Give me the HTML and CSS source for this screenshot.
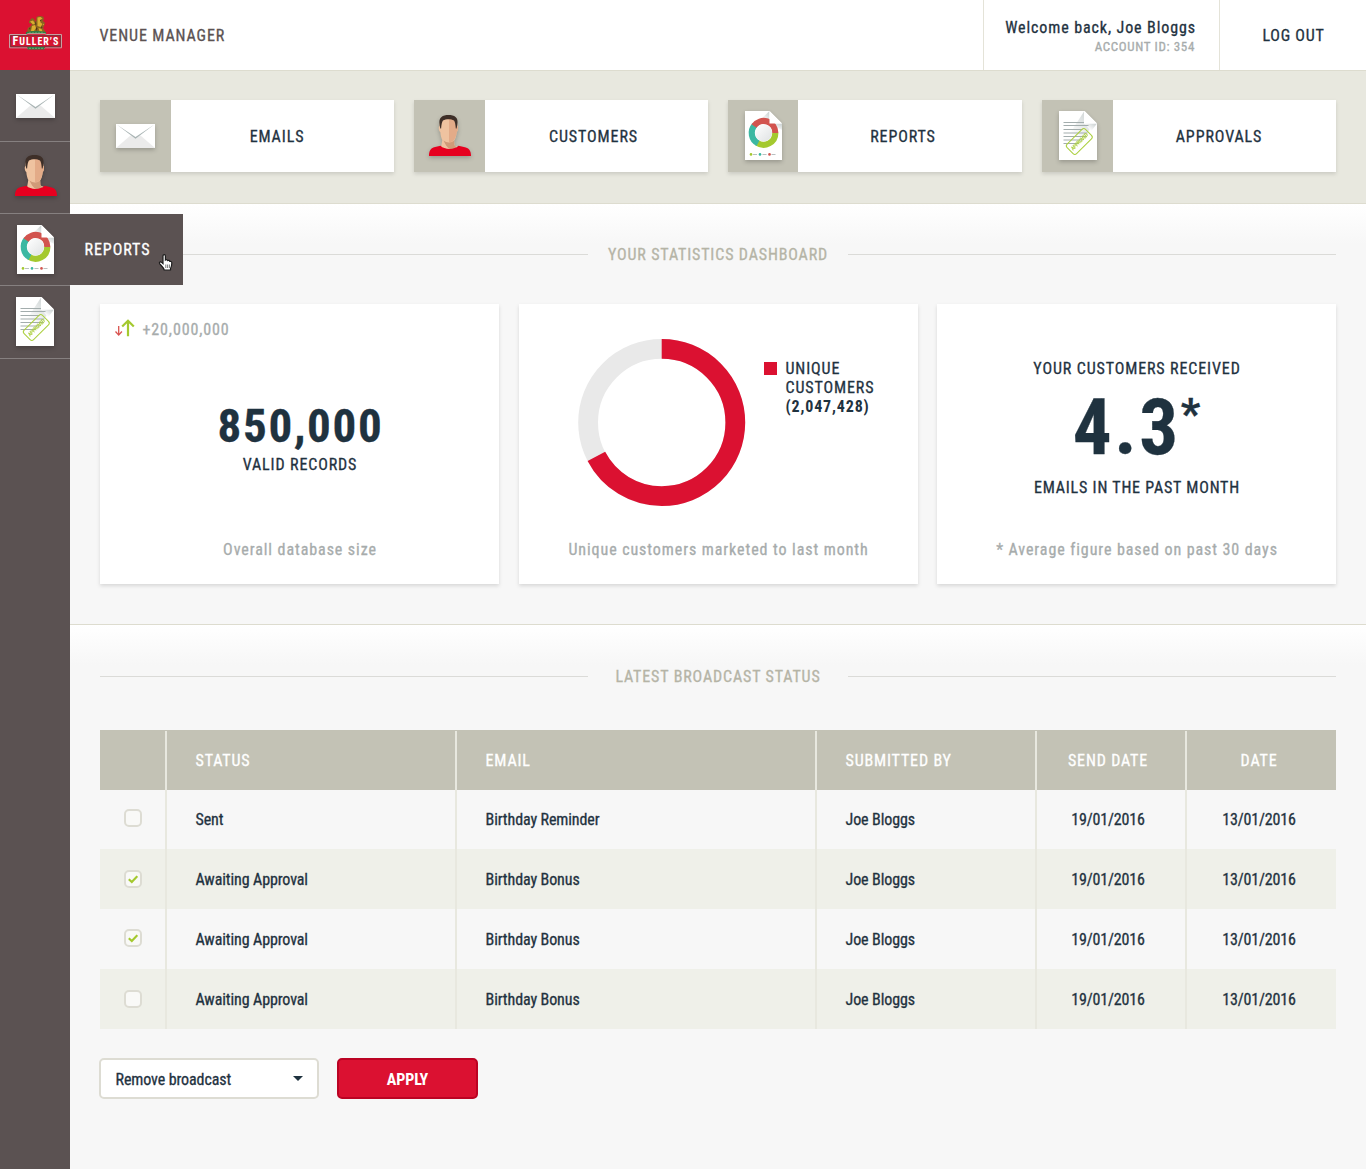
FILE: index.html
```html
<!DOCTYPE html>
<html lang="en">
<head>
<meta charset="utf-8">
<title>Venue Manager</title>
<link rel="stylesheet" href="styles.css">
</head>
<body>
<svg class="defs" width="0" height="0" aria-hidden="true">
  <defs>
    <linearGradient id="fold" x1="0" y1="1" x2="1" y2="0"><stop offset="0.3" stop-color="#fff"/><stop offset="1" stop-color="#c6cdcd"/></linearGradient>
    <linearGradient id="disc" x1="0" y1="0" x2="1" y2="1"><stop offset="0" stop-color="#fff"/><stop offset="1" stop-color="#dfe2e3"/></linearGradient>
  </defs>
  <symbol id="i-mail" viewBox="0 0 39 24">
    <path fill="#fff" d="M0 0h39v24H0z"/>
    <path fill="#ebebeb" d="M0 24 14.500 11.500h10L39 24z"/>
    <path fill="#fff" d="M0 0h39L19.500 14z"/>
    <path fill="#a9b4b4" d="M1 .8 19.500 13 38 .8 19.500 14.800z"/>
  </symbol>
  <symbol id="i-user" viewBox="0 0 42 41">
    <path fill="#efc3a0" d="M10.500 11C10.500 5 13 2 19.500 2S28.300 5 28.300 11c1.200.2.900 5-.6 6-.3 4-1.200 6.500-2.500 8.500l.3 5L29 32l-8 5-9-4.500 1.300-7.500c-1-2-1.700-4.500-2-8C9.600 16 9.300 11.200 10.500 11z"/>
    <path fill="#e3ab88" d="M20 2c6 0 8.300 3 8.300 9 1.200.2.900 5-.6 6-.4 5-2.700 10-6.200 10H20z"/>
    <path fill="#d09b78" d="M14.500 25.500c3 2.500 8 2.500 10.700 0V30l2.300 2.500L22 35c-4-2.500-6-6-7.500-9.500z"/>
    <path fill="#3e2f28" d="M11.300 13.500C10 8 9.800 4 12.500 2c3-2.600 11-2.600 14 0 2.700 2 2.300 6 1.100 11.500h-.8c-.3-4-.8-6.500-1.800-8-3-1.600-8-1.600-11 0-1 1.500-1.600 4-1.900 8z"/>
    <path fill="#e6001f" d="M0 41c0-5.500 2-7.800 5-8.700l6.500-1.500c4 4.200 14 4.200 18 0l6.500 1.500c4 1 6 3.700 6 8.700z"/>
  </symbol>
  <symbol id="i-report" viewBox="0 0 37 49">
    <path fill="#fff" d="M0 0h24.500L37 12.500V49H0z"/>
    <path fill="url(#fold)" d="M14 10 24.500 0v13z"/>
    <path fill="url(#fold)" d="M24.500 12.500H37V19z"/>
    <g fill="none" stroke-width="6.200">
      <path stroke="#a4c92f" d="M30.300 22A11.700 11.700 0 0 1 12 31.700"/>
      <path stroke="#3cb8a2" d="M13 32.300A11.700 11.700 0 0 1 9.600 14.300"/>
      <path stroke="#d2544f" d="M9 15A11.700 11.700 0 0 1 30.300 22"/>
    </g>
    <path fill="#fff" d="M24.500 0 37 12.500H24.500z"/>
    <circle cx="18.600" cy="22" r="8.400" fill="url(#disc)"/>
    <g fill="#b9c0c1"><path d="M8 43h4v.9H8zM17.500 43h4v.9h-4zM26.500 43h4v.9h-4z"/></g>
    <circle cx="6" cy="43.400" r="1.300" fill="#a4c92f"/><circle cx="15" cy="43.400" r="1.300" fill="#3cb8a2"/><circle cx="24.500" cy="43.400" r="1.300" fill="#d2544f"/>
  </symbol>
  <symbol id="i-approve" viewBox="0 0 38 49">
    <path fill="#fff" d="M0 0h25.500L38 12.500V49H0z"/>
    <path fill="url(#fold)" d="M4 33 25 0.500v12.500L34 14 20 33z"/>
    <path fill="url(#fold)" d="M25.500 12.500H38l-6 8z"/>
    <path fill="#fff" d="M25.500 0 38 12.500H25.500z"/>
    <path stroke="#a3adad" stroke-width="1" d="M4.500 11.500H25M4.500 14.500h25M4.500 18.500h19M4.500 22h24M4.500 25.500h23M4.500 29h19M4.500 32.500h15"/>
    <g transform="translate(20.300 30.500) rotate(-45)" fill="none" stroke="#abcf3e">
      <rect x="-13" y="-6.700" width="26" height="13.400" rx="2.500"/>
    </g>
  </symbol>
</svg>

<div class="app">
  <aside class="sidebar">
    <div class="logo">
      <svg width="54" height="36" viewBox="0 0 54 36">
        <path fill="#8a6420" d="M20 6l3-3 2 1 2 3 .5-5L30 1l4 .5 1 2-1 2.500 2 2-1 3-1 2 2 3 .5 2H19l-1-2 1-3 3-2 1-2-3-1z"/>
        <path fill="#d9ae2e" d="M21 6.500l3-1 2 3-2 1zM28.500 2.500l3-.5 2 1.500-2 1v3l2 1.500-2 3-3-1zM23 11l3-1 1 3-2 3h-3zM29.500 13l3 1 1 2.500h-3zM34 9.500l1-1v2z"/>
        <path fill="#4a3516" d="M26 6l1.500 3-1 1.500zM31 5l1.500.5-1.500 1zM27 12l1.500 1.500L27 16zM20 13l1.500-.5-.5 2.500zM32 11.500l1.500.5-1 1.500z"/>
        <path fill="#2f7d46" d="M17 17q10-2 20 0v3H17z"/>
        <path fill="#d51530" stroke="#c9a0a3" d="M.5 19.500h17l1.300-.8H36l1.300.8h15.200v13.300h-16l-1 .7H19l-1-.7H.5z"/>
        <path fill="none" stroke="#693a3d" stroke-width=".9" d="M1.700 20.700h49.600v11H1.700z"/>
        <text class="brand" x="3.500" y="30.300" textLength="46" lengthAdjust="spacing"><tspan class="brand-cap">F</tspan>ULLER’S</text>
        <path fill="#2f7d46" d="M18.500 32h17v2.500h-17z"/>
        <path stroke="#9bbf8b" stroke-width=".6" stroke-dasharray="2 1" d="M20 18h15M20 33.300h15"/>
      </svg>
    </div>
    <a class="side-item"><svg class="ic mail"><use href="#i-mail"/></svg></a>
    <a class="side-item raised"><svg class="ic user"><use href="#i-user"/></svg></a>
    <a class="side-item"><svg class="ic report"><use href="#i-report"/></svg>
      <span class="flyout">REPORTS</span>
      <svg class="cursor" width="15" height="18" viewBox="0 0 15 18"><path fill="#fff" stroke="#1c1c1c" stroke-width="1.200" d="M5 2c0-1.800 2.400-1.800 2.400 0v4c.8-.6 1.900-.3 2.200.6.900-.5 1.900-.2 2.200.8 1.300-.3 2 .5 2 1.600 0 3-.3 4-1.300 5.500v1.500H6.200C6 13.700 3 11.500 1.600 9.600c-.7-1.300.8-2.200 2-1.200L5 9.600z"/><path stroke="#1c1c1c" stroke-width=".6" d="M7.800 10.500v3.500M9.600 10.500v3.500M11.400 10.500v3.500"/></svg>
    </a>
    <a class="side-item last"><svg class="ic approve" viewBox="0 0 38 49"><use href="#i-approve" width="38" height="49"/><text class="stamp" text-anchor="middle" textLength="22" transform="translate(20.300 30.500) rotate(-45)" y="2">APPROVED</text></svg></a>
  </aside>

  <div class="main">
    <header class="topbar">
      <h1 class="title">VENUE MANAGER</h1>
      <div class="account"><div class="welcome">Welcome back, Joe Bloggs</div><div class="acc-id">ACCOUNT ID: 354</div></div>
      <a class="logout">LOG OUT</a>
    </header>

    <nav class="tiles">
      <a class="tile"><span class="tile-ic"><svg class="ic mail"><use href="#i-mail"/></svg></span><span class="tile-label">EMAILS</span></a>
      <a class="tile customers"><span class="tile-ic"><svg class="ic user"><use href="#i-user"/></svg></span><span class="tile-label">CUSTOMERS</span></a>
      <a class="tile reports"><span class="tile-ic"><svg class="ic report"><use href="#i-report"/></svg></span><span class="tile-label">REPORTS</span></a>
      <a class="tile approvals"><span class="tile-ic"><svg class="ic approve" viewBox="0 0 38 49"><use href="#i-approve" width="38" height="49"/><text class="stamp" text-anchor="middle" textLength="22" transform="translate(20.300 30.500) rotate(-45)" y="2">APPROVED</text></svg></span><span class="tile-label">APPROVALS</span></a>
    </nav>

    <section class="panel stats">
      <h2 class="heading"><span>YOUR STATISTICS DASHBOARD</span></h2>
      <div class="cards">
        <article class="card">
          <div class="trend">
            <svg width="20" height="18" viewBox="0 0 20 18" fill="none"><path stroke="#d9534f" stroke-width="1.300" d="M3.700 7v9M.5 12.500l3.200 3.600 3.200-3.600"/><path stroke="#a4c92f" stroke-width="2.200" d="M13 17.200V2M7.200 7.500 13 1.700l5.800 5.800"/></svg>
            <span>+20,000,000</span>
          </div>
          <div class="records">850,000</div>
          <div class="records-label">VALID RECORDS</div>
          <p class="note">Overall database size</p>
        </article>
        <article class="card donut-card">
          <div class="chart">
            <svg width="168" height="168" viewBox="0 0 168 168"><g fill="none" stroke-width="19.800"><circle cx="83.700" cy="83.500" r="73.600" stroke="#e9e9e9"/><circle cx="83.700" cy="83.500" r="73.600" stroke="#db1131" pathLength="360" stroke-dasharray="242.500 360" transform="rotate(-90 83.700 83.500)"/></g></svg>
            <div class="legend"><i class="swatch"></i><div>UNIQUE<br>CUSTOMERS<br><b>(2,047,428)</b></div></div>
          </div>
          <p class="note">Unique customers marketed to last month</p>
        </article>
        <article class="card">
          <div class="received">YOUR CUSTOMERS RECEIVED</div>
          <div class="average">4.3<span class="star">*</span></div>
          <div class="past">EMAILS IN THE PAST MONTH</div>
          <p class="note">* Average figure based on past 30 days</p>
        </article>
      </div>
    </section>

    <section class="panel broadcasts">
      <h2 class="heading"><span>LATEST BROADCAST STATUS</span></h2>
      <div class="table">
        <div class="row head"><div></div><div>STATUS</div><div>EMAIL</div><div>SUBMITTED BY</div><div class="mid">SEND DATE</div><div class="mid">DATE</div></div>
        <div class="row first"><div><i class="check"></i></div><div>Sent</div><div>Birthday Reminder</div><div>Joe Bloggs</div><div class="mid">19/01/2016</div><div class="mid">13/01/2016</div></div>
        <div class="row alt"><div><i class="check"><svg width="10" height="9" viewBox="0 0 10 9"><path fill="none" stroke="#a4c92f" stroke-width="2.200" d="M.8 4.300 3.800 7 9.300 1.200"/></svg></i></div><div>Awaiting Approval</div><div>Birthday Bonus</div><div>Joe Bloggs</div><div class="mid">19/01/2016</div><div class="mid">13/01/2016</div></div>
        <div class="row up"><div><i class="check"><svg width="10" height="9" viewBox="0 0 10 9"><path fill="none" stroke="#a4c92f" stroke-width="2.200" d="M.8 4.300 3.800 7 9.300 1.200"/></svg></i></div><div>Awaiting Approval</div><div>Birthday Bonus</div><div>Joe Bloggs</div><div class="mid">19/01/2016</div><div class="mid">13/01/2016</div></div>
        <div class="row alt"><div><i class="check"></i></div><div>Awaiting Approval</div><div>Birthday Bonus</div><div>Joe Bloggs</div><div class="mid">19/01/2016</div><div class="mid">13/01/2016</div></div>
      </div>
      <div class="actions">
        <div class="select"><span>Remove broadcast</span><i class="caret"></i></div>
        <button class="apply">APPLY</button>
      </div>
    </section>
  </div>
</div>
</body>
</html>
```
FILE: styles.css
```css
* { box-sizing: border-box; }
body {
  margin: 0;
  font-family: "Roboto Condensed", Roboto, "Liberation Sans", sans-serif;
  font-stretch: 75%;
  font-size: 16px;
  font-weight: 400;
  line-height: 19px;
  color: #1f323f;
  background: #f7f7f7;
  -webkit-text-stroke: .3px currentColor;
}
h1, h2, p { margin: 0; font-size: 16px; font-weight: 400; }
svg, b { -webkit-text-stroke: 0; }
.defs { position: absolute; }
.app { display: flex; min-height: 1169px; }

/* Sidebar */
.sidebar { width: 70px; flex: none; background: #5b5252; }
.logo { height: 70px; background: #db1131; padding: 15px 0 0 9px; }
.brand { font-size: 10px; font-weight: 700; fill: #fff; }
.brand-cap { font-size: 12px; }
.stamp { font-size: 5.500px; font-weight: 700; fill: #abcf3e; }
.side-item { position: relative; display: flex; height: 72px; align-items: center; justify-content: center; border-bottom: 1px solid #868080; }
.side-item.raised { padding: 0 0 4px 2px; }
.side-item.last { height: 73px; padding-bottom: 2px; }
.ic { display: block; filter: drop-shadow(0 2px 2px rgba(0, 0, 0, .22)); overflow: visible; }
.mail { width: 39px; height: 24px; }
.user { width: 42px; height: 41px; }
.report { width: 37px; height: 49px; }
.approve { width: 38px; height: 49px; }
.flyout {
  position: absolute; left: 70px; top: 0; z-index: 2; width: 113px; height: 71px;
  padding: 26px 0 0 14.500px; background: #5b5252; color: #fff; letter-spacing: .95px;
}
.cursor { position: absolute; left: 158px; top: 40px; z-index: 3; }

/* Top bar */
.main { flex: 1; display: flex; flex-direction: column; min-width: 0; }
.topbar { display: flex; height: 71px; background: #fff; border-bottom: 1px solid #dddccf; }
.title { flex: 1; padding: 26px 0 0 29.500px; color: #5b5252; letter-spacing: .9px; }
.account { width: 237px; border: solid #e4e3d8; border-width: 0 1px; padding: 18px 23px 0 0; text-align: right; }
.welcome { letter-spacing: .9px; white-space: nowrap; }
.acc-id { padding: 0 1px 0 0; font-size: 13px; color: #a7acac; letter-spacing: .65px; }
.logout { width: 146px; padding: 26px 0 0 1px; text-align: center; letter-spacing: .75px; }

/* Shortcut tiles */
.tiles { display: grid; grid-template-columns: repeat(4, 1fr); gap: 20px; height: 133px; padding: 29px 30px 0; background: #e8e8df; border-bottom: 1px solid #dddccf; }
.tile { display: flex; height: 72px; background: #fff; box-shadow: 0 2px 4px rgba(0, 0, 0, .13); }
.tile-ic { display: flex; width: 71px; align-items: center; justify-content: center; background: #c3c2b5; }
.tile-label { flex: 1; display: flex; align-items: center; justify-content: center; letter-spacing: .9px; padding: 1px 11px 0 0; }
.customers .tile-label { padding-right: 6px; }
.customers .tile-ic { padding-bottom: 1px; }
.reports .tile-ic { width: 70px; padding-bottom: 1px; }
.reports .tile-label { padding-right: 14px; }
.approvals .tile-ic { padding-bottom: 1px; }

/* Panels */
.panel { padding: 0 30px; background: linear-gradient(#fff, #f7f7f7 40px); }
.stats { height: 421px; padding-top: 41px; border-bottom: 1px solid #dddccf; }
.broadcasts { flex: 1; padding-top: 42px; }
.heading { display: grid; grid-template-columns: 1fr 260px 1fr; align-items: center; height: 19px; color: #b5b4a6; letter-spacing: .86px; text-align: center; }
.heading::before, .heading::after { content: ""; height: 1px; background: #dbdbd8; }
.cards { display: flex; justify-content: space-between; margin-top: 40px; }
.card { display: flex; flex-direction: column; width: 399px; height: 280px; background: #fff; text-align: center; box-shadow: 0 2px 4px rgba(0, 0, 0, .13); letter-spacing: .88px; }
.note { margin-top: auto; padding: 0 0 25px 1px; color: #a7acac; letter-spacing: .92px; }
.trend { display: flex; gap: 7.500px; padding: 15px 0 0 15px; height: 35px; color: #a7acac; }
.trend span { padding-top: 1px; letter-spacing: .87px; }
.records { height: 56px; margin-top: 59px; padding-left: 2px; font-size: 47px; line-height: 56px; font-weight: 700; letter-spacing: 1.700px; }
.records-label { margin-top: 1px; padding-left: 1px; }
.chart { display: flex; padding: 35px 0 0 59px; text-align: left; }
.legend { display: flex; padding: 20px 0 0 18px; gap: 9px; }
.legend b { letter-spacing: .85px; }
.swatch { width: 13px; height: 13px; margin-top: 3px; background: #db1131; }
.received { margin-top: 55px; padding-left: 1px; }
.average { height: 90px; margin-top: 5px; font-size: 77px; line-height: 90px; font-weight: 700; letter-spacing: 2.600px; }
.star { font-size: 43px; letter-spacing: 0; vertical-align: 26px; line-height: 0; }
.past { margin-top: 5px; padding-left: 1px; letter-spacing: .8px; }

/* Broadcast table */
.table { margin-top: 44px; }
.row { display: grid; grid-template-columns: 67px 290px 360px 220px 150px 149px; height: 60px; letter-spacing: -.1px; }
.row > div { display: flex; align-items: center; padding-left: 28.500px; border-right: 2px solid #e8e8df; }
.row > div:first-child { justify-content: center; padding: 0; }
.row > div:last-child { border-right: 0; padding-right: 5px; }
.row > .mid { justify-content: center; padding: 0 6px 0 0; letter-spacing: -.15px; }
.row.first { height: 59px; }
.row.first > div:first-child { padding-bottom: 3px; }
.row.up > div:first-child { padding-bottom: 2px; }
.row.head { background: #c3c2b5; color: #fff; padding-top: 1px; }
.row.head > div { letter-spacing: .85px; }
.alt { background: #eff0e9; }
.check { display: flex; width: 18px; height: 18px; align-items: center; justify-content: center; background: #f9f9f7; border: 2px solid #dddcd3; border-radius: 5px; }
.actions { display: flex; gap: 18px; margin: 29px 0 0 -1px; }
.select { display: flex; align-items: center; justify-content: space-between; width: 220px; height: 41px; padding: 1px 14px 0 14.500px; background: #fff; border: 2px solid #dddcd3; border-radius: 5px; letter-spacing: -.1px; }
.caret { margin-top: -2px; border: 5px solid transparent; border-top-color: #1f323f; border-bottom: 0; }
.apply { width: 141px; height: 41px; padding: 1px 0 0; background: #db1131; border: 2px solid #bb0323; border-radius: 5px; color: #fff; font: inherit; font-weight: 700; letter-spacing: -.1px; -webkit-text-stroke: 0; }
```
